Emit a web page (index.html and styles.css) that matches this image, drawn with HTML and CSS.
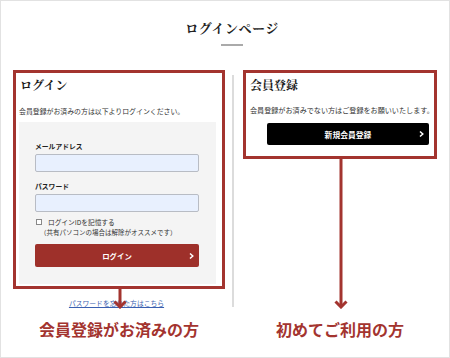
FILE: index.html
```html
<!DOCTYPE html>
<html lang="ja">
<head>
<meta charset="utf-8">
<title>ログインページ</title>
<link rel="stylesheet" href="styles.css">
</head>
<body>
<div class="page">
  <header class="page-head">
    <h1 class="page-title">ログインページ</h1>
    <div class="title-rule"></div>
  </header>
  <main class="main">
    <div class="col col-left">
      <section class="box login-box">
        <h2 class="box-title">ログイン</h2>
        <p class="box-desc desc-left">会員登録がお済みの方は以下よりログインください。</p>
        <div class="panel">
          <div class="field-label">メールアドレス</div>
          <div class="input"></div>
          <div class="field-label label-pw">パスワード</div>
          <div class="input"></div>
          <div class="check-row"><span class="check"></span>ログインIDを記憶する</div>
          <div class="check-note">（共有パソコンの場合は解除がオススメです）</div>
          <div class="btn btn-red">ログイン
            <svg class="btn-arrow" width="5" height="7" viewBox="0 0 5 7"><polyline points="1,1 3.8,3.5 1,6" fill="none" stroke="#fff" stroke-width="1.5"/></svg>
          </div>
        </div>
        <svg class="arrow arrow-short" width="14" height="20" viewBox="0 0 14 20"><line x1="7" y1="0" x2="7" y2="18" stroke="#a3342f" stroke-width="3"/><polyline points="1.5,12.5 7,18 12.5,12.5" fill="none" stroke="#a3342f" stroke-width="3"/></svg>
      </section>
      <a class="forgot" href="#">パスワードを忘れた方はこちら</a>
    </div>
    <div class="divider"></div>
    <div class="col col-right">
      <section class="box reg-box">
        <h2 class="box-title">会員登録</h2>
        <p class="box-desc desc-right">会員登録がお済みでない方はご登録をお願いいたします。</p>
        <div class="btn btn-black">新規会員登録
          <svg class="btn-arrow" width="5" height="7" viewBox="0 0 5 7"><polyline points="1,1 3.8,3.5 1,6" fill="none" stroke="#fff" stroke-width="1.5"/></svg>
        </div>
        <svg class="arrow arrow-long" width="14" height="150" viewBox="0 0 14 150"><line x1="7" y1="0" x2="7" y2="148" stroke="#a3342f" stroke-width="3"/><polyline points="1.5,142.5 7,148 12.5,142.5" fill="none" stroke="#a3342f" stroke-width="3"/></svg>
      </section>
    </div>
    <div class="note-label note-left">会員登録がお済みの方</div>
    <div class="note-label note-right">初めてご利用の方</div>
  </main>
</div>
</body>
</html>
```

FILE: styles.css
```css
* { box-sizing: border-box; }
html, body { margin: 0; padding: 0; background: #fff; }
body {
  font-family: "Noto Sans CJK JP", "Noto Sans", sans-serif;
  color: #333;
}
.page {
  width: 450px;
  height: 358px;
  border: 1px solid #e2e2e2;
  padding: 0 12px;
  position: relative;
  overflow: hidden;
}
.page-head {
  padding-left: 14px;
  padding-top: 18px;
}
.page-title {
  margin: 0;
  text-align: center;
  font-family: "Noto Serif CJK JP", "Noto Sans CJK JP", serif;
  font-size: 13px;
  line-height: 18px;
  font-weight: 700;
  color: #222;
  letter-spacing: 0.5px;
}
.title-rule {
  width: 22px;
  height: 2px;
  background: #aaa;
  margin: 7px auto 0;
}
.main {
  margin-top: 24px;
  display: grid;
  grid-template-columns: 212px 18px 194px;
  grid-template-rows: auto auto;
  row-gap: 10px;
}
.col { display: flex; flex-direction: column; }
.col-right { align-items: stretch; }
.box {
  border: 3px solid #a3342f;
  position: relative;
}
.login-box { padding: 4px 6px 2px 3px; }
.reg-box { padding: 4px 5px 11px 4px; }
.box-title {
  margin: 0;
  font-family: "Noto Serif CJK JP", "Noto Sans CJK JP", serif;
  font-size: 12px;
  line-height: 16px;
  font-weight: 700;
  color: #1a1a1a;
}
.login-box .box-title { padding-left: 1px; }
.box-desc {
  margin: 12px 0 0;
  font-size: 7px;
  line-height: 10px;
  color: #333;
  white-space: nowrap;
}
.desc-left { margin-top: 13px; font-size: 6.9px; }
.desc-right { font-size: 7.1px; }
.panel {
  margin-top: 6px;
  background: #f4f4f4;
  padding: 18px 17px 17px 16px;
}
.field-label {
  font-size: 6.8px;
  line-height: 12px;
  font-weight: 700;
  color: #222;
}
.label-pw { margin-top: 8px; }
.input {
  margin-top: 2px;
  height: 18px;
  background: #e8f0fe;
  border: 1px solid #b8bcc4;
  border-radius: 2px;
}
.check-row {
  margin-top: 5px;
  font-size: 6.7px;
  line-height: 10px;
  color: #333;
  display: flex;
  align-items: center;
  white-space: nowrap;
}
.check {
  width: 6px;
  height: 6px;
  border: 1px solid #888;
  background: #fff;
  margin: 0 6px 0 1px;
  flex: none;
}
.check-note {
  font-size: 6.5px;
  line-height: 10px;
  color: #333;
  padding-left: 5px;
  white-space: nowrap;
}
.btn {
  position: relative;
  display: flex;
  align-items: center;
  justify-content: center;
  color: #fff;
  font-weight: 700;
  font-size: 7.4px;
  border-radius: 2px;
}
.btn-red {
  margin-top: 7px;
  height: 23px;
  background: #9e302a;
}
.btn-black {
  margin-top: 8px;
  margin-left: 17px;
  height: 22px;
  background: #000;
  font-size: 7.8px;
}
.btn-arrow {
  position: absolute;
  right: 5px;
  top: 50%;
  transform: translateY(-50%);
}
.arrow {
  position: absolute;
  left: 50%;
  top: calc(100% + 3px);
  transform: translateX(-50%);
  margin-left: 1px;
  display: block;
}
.forgot {
  margin-top: 9px;
  text-align: center;
  font-size: 6.8px;
  line-height: 10px;
  color: #3a5fb0;
  text-decoration: underline;
  padding-right: 5px;
  white-space: nowrap;
}
.divider {
  width: 2px;
  margin: 5px 0 1px 7px;
  background: #dcdcdc;
}
.note-label {
  grid-row: 2;
  text-align: center;
  font-size: 16px;
  line-height: 22px;
  font-weight: 700;
  color: #a3342f;
  white-space: nowrap;
}
.note-left { grid-column: 1; }
.note-right { grid-column: 3; }
```
